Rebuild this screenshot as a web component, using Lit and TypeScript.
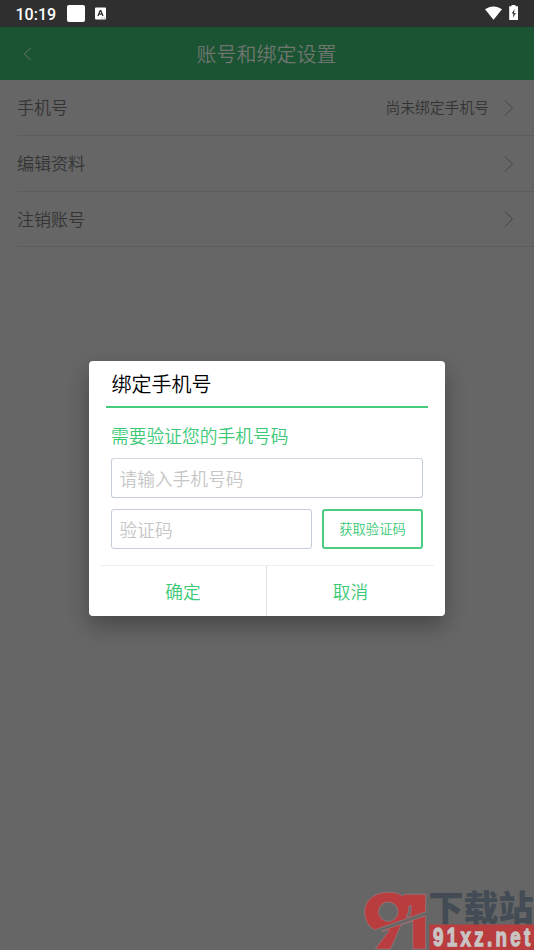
import { LitElement, html, css, svg } from "lit";
import { customElement, property } from "lit/decorators.js";

@customElement("status-bar")
class StatusBar extends LitElement {
  static styles = css`
    :host { display: flex; align-items: center; height: 27px; box-sizing: border-box; padding: 0 15px; background: #2f2f2f; color: #fff; }
    .time { font: 500 16px/27px Roboto, sans-serif; width: 52px; text-indent: 0.5px; padding-top: 1px; }
    .block { width: 18px; height: 17px; border-radius: 2px; background: #fff; }
    .key { margin-left: 10px; }
    .right { margin-left: auto; display: flex; }
    svg { display: block; }
  `;
  render() {
    return html`
      <span class="time">10:19</span><span class="block"></span>
      <svg class="key" width="11" height="13" viewBox="0 0 11 13">
        <rect x="0" y="0.5" width="11" height="12" rx="1" fill="#fff" />
        <path d="M3 9 5.2 3.6h.6L8 9M3.8 7.2h3.3" fill="none" stroke="#2f2f2f" stroke-width="1.3" />
        <path d="M6.5 11h1M8.8 11h1" stroke="#777" />
      </svg>
      <svg class="right" width="34" height="17" viewBox="0 0 34 17">
        <path d="M0 4.3C5 .4 12 .4 17 4.3L8.5 14.8Z" fill="#fff" />
        <path d="M26.5 0h4v1.3H33V15H24.2V1.3h2.3Z" fill="#fff" />
        <path d="M29.7 4 26.7 8.4h1.8l-.7 4.3L30.9 7.9H29Z" fill="#2f2f2f" />
      </svg>`;
  }
}

@customElement("setting-row")
class SettingRow extends LitElement {
  @property() label = "";
  @property() value = "";
  static styles = css`
    :host { display: flex; align-items: center; box-sizing: border-box; height: 56px; margin-left: 17px; padding-right: 20px; border-bottom: 1px solid #5d5d5d; color: #343434; font-size: 17px; }
    :host(:last-of-type) { height: 55px; }
    .label { margin-top: -2px; }
    .value { margin: -2px 15px 0 auto; font-size: 14.8px; }
    svg { display: block; }
  `;
  render() {
    return html`<span class="label">${this.label}</span><span class="value">${this.value}</span>
      <svg width="10" height="18" viewBox="0 0 10 18"><path d="M1 1.5 8.5 9 1 16.5" fill="none" stroke="#424242" /></svg>`;
  }
}

@customElement("bind-dialog")
class BindDialog extends LitElement {
  static styles = css`
    :host { display: flex; flex-direction: column; box-sizing: border-box; width: 356px; height: 255px; border-radius: 4px; background: #fff; color: #3bc976; box-shadow: 0 10px 22px rgba(0, 0, 0, 0.3); }
    .title { box-sizing: border-box; flex: none; height: 47px; margin: 0 17px; padding-left: 5.5px; border-bottom: 2px solid #46ca7b; color: #000; font-size: 20px; line-height: 45px; }
    .hint { flex: none; margin: 14px 22px 0; font-size: 17.75px; line-height: 26px; height: 36px; }
    .field { box-sizing: border-box; flex: none; height: 40px; border: 1px solid #c5ccda; border-radius: 3px; padding-left: 7.5px; color: #c6c6c6; font-size: 17.7px; line-height: 38px; }
    .phone { margin: 0 22px; border-top-color: #e1e7ef; box-shadow: inset 0 0.5px 0 #c5ccda; }
    .phone { border-top-color: #d0d7e2; box-shadow: none; }
    .code { display: flex; flex: none; gap: 10px; margin: 11px 22px 0; }
    .code .field { width: 201px; }
    .get { box-sizing: border-box; flex: 1; height: 40px; border: 2px solid #4bcc80; border-radius: 3px; text-align: center; font-size: 13.3px; line-height: 36px; }
    .actions { display: flex; flex: 1; min-height: 0; margin: 16px 11px 0; border-top: 1px solid #eee; }
    .action { flex: 1; text-align: center; font-size: 17.7px; line-height: 50px; }
    .action:first-child { flex: 0 0 166px; }
    .action + .action { border-left: 1px solid #e2e2e2; }
  `;
  render() {
    return html`
      <div class="title">绑定手机号</div>
      <div class="hint">需要验证您的手机号码</div>
      <div class="field phone">请输入手机号码</div>
      <div class="code"><div class="field">验证码</div><div class="get">获取验证码</div></div>
      <div class="actions"><div class="action">确定</div><div class="action">取消</div></div>`;
  }
}

const siteMark = svg`
  <g fill="#b93c3f" stroke="#9a8585" stroke-width="0.6">
    <path fill-rule="evenodd" d="M20.5 50C13 45.5 10.5 38 10.6 31 11 19.5 21.5 12.3 34 12.3 41 12.3 46 13.5 48.500 16.2L50.5 14.3H71.700V31.800L22.500 49.300ZM34.3 22A9.7 9.7 0 1 0 34.3 41.4 9.7 9.7 0 1 0 34.3 22ZM54.700 26.500 57 25.600C57.300 30 57.300 33 55.500 36.300L52 37.300C54 34 54.900 31 54.700 26.500Z" />
    <path d="M27.5 51 71.7 35.7V69H58.8V41L47 45 36.5 69H21.3L35.5 50Z" />
  </g>
  <text class="cn" x="74.5" y="41" textLength="105">下载站</text>
  <rect x="75.5" y="44.5" width="104.5" height="25.5" fill="#b93c3f" />
  <g transform="translate(79 65.5) scale(.72 1)"><text class="net" x="0" y="0" textLength="135">91xz.net</text></g>`;

@customElement("app-root")
class AppRoot extends LitElement {
  static styles = css`
    :host { display: flex; flex-direction: column; position: relative; height: 950px; overflow: hidden; background: #666; font-family: "Noto Sans CJK SC", sans-serif; font-weight: 350; }
    .header { display: grid; grid-template-columns: 55px 1fr 56px; align-items: center; height: 53px; background: #1b5432; color: #6f7671; font-size: 20px; text-align: center; }
    .back { margin-left: 22px; display: block; }
    .overlay { position: absolute; left: 89px; top: 361px; }
    .mark { position: absolute; right: 0; bottom: 0; }
    .cn { font: 900 35px "Noto Sans CJK SC", sans-serif; fill: #434c55; }
    .net { font: 700 26px "Liberation Sans", sans-serif; fill: #c9c5c5; stroke: #c9c5c5; stroke-width: 1.3; }
  `;
  render() {
    return html`
      <status-bar></status-bar>
      <div class="header">
        <svg class="back" width="10" height="14" viewBox="0 0 10 14"><path d="M8.5 1 2.5 7l6 6" fill="none" stroke="#6b756e" /></svg>
        <span>账号和绑定设置</span>
      </div>
      <setting-row label="手机号" value="尚未绑定手机号"></setting-row>
      <setting-row label="编辑资料"></setting-row>
      <setting-row label="注销账号"></setting-row>
      <bind-dialog class="overlay"></bind-dialog>
      <svg class="mark" width="180" height="70" viewBox="0 0 180 70">${siteMark}</svg>`;
  }
}
